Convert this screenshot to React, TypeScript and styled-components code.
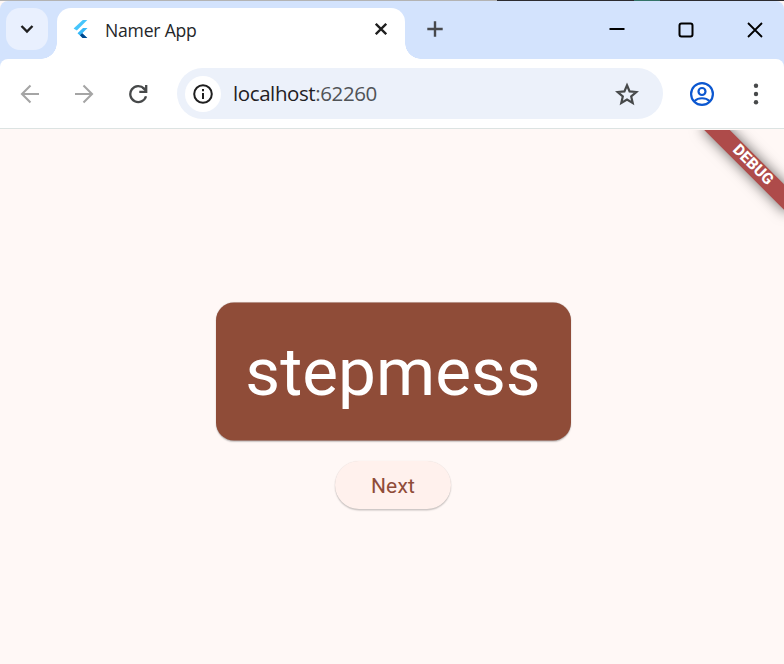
import React from 'react';
import styled, { createGlobalStyle } from 'styled-components';

const Global = createGlobalStyle`
  * { box-sizing: border-box; }
  html, body { margin: 0; padding: 0; background: #fff8f6; overflow: hidden; }
`;

const Window = styled.div`
  display: flex;
  flex-direction: column;
  width: 784px;
  height: 664px;
  overflow: hidden;
  background: #fff8f6;
`;

const Edge = styled.div`
  flex: none;
  height: 1px;
  background: linear-gradient(90deg, #b3b3b3 0 497px, #2c2c30 497px 634px, #347468 634px 660px, #2c2c30 660px);
`;

const TabStrip = styled.div`
  flex: none;
  display: flex;
  height: 58px;
  background: #d3e3fd;
  border-radius: 8px 8px 0 0;
`;

const TabSearch = styled.button`
  flex: none;
  display: grid;
  place-items: center;
  width: 42px;
  height: 42px;
  margin: 7px 9px 0 6px;
  padding: 0;
  border: 0;
  border-radius: 14px;
  background: #e9f0fe;
`;

const Tab = styled.div`
  position: relative;
  flex: none;
  display: flex;
  align-items: flex-start;
  width: 348px;
  height: 51px;
  margin-top: 7px;
  padding: 12px 18px 0 16px;
  border-radius: 14px 14px 0 0;
  background: #fff;

  &::before,
  &::after {
    content: '';
    position: absolute;
    bottom: 0;
    width: 16px;
    height: 16px;
  }
  &::before {
    left: -16px;
    background: radial-gradient(circle at 0 0, transparent 15.5px, #fff 16px);
  }
  &::after {
    right: -16px;
    background: radial-gradient(circle at 100% 0, transparent 15.5px, #fff 16px);
  }
`;

const TabTitle = styled.span`
  flex: 1;
  margin: -2px 0 0 14px;
  font: 400 17.6px/24px 'Open Sans', 'Noto Sans', sans-serif;
  letter-spacing: -0.22px;
  color: #242629;
  white-space: nowrap;
`;

const CloseMark = styled.svg`
  margin-top: 3px;
`;

const NewTab = styled.div`
  margin: 20px 0 0 22px;
  height: 17px;
  line-height: 0;
`;

const Controls = styled.div`
  display: flex;
  align-items: center;
  gap: 53px;
  height: 20px;
  margin: 19px 21.5px 0 auto;
`;

const Toolbar = styled.div`
  flex: none;
  display: flex;
  align-items: center;
  height: 70px;
  padding: 0 22px 0 20px;
  border-bottom: 1px solid #dce3e2;
  border-radius: 8px 8px 0 0;
  background: #fff;
  box-shadow: 0 -8px 0 0 #d3e3fd;
`;

const NavIcons = styled.div`
  display: flex;
  align-items: center;
  gap: 34px;
  width: 157px;
`;

const AddressBar = styled.div`
  display: flex;
  align-items: center;
  width: 486px;
  height: 51px;
  padding: 0 24px 0 8px;
  border-radius: 26px;
  background: #ecf1fa;
`;

const SiteInfo = styled.span`
  display: grid;
  place-items: center;
  width: 36px;
  height: 36px;
  border-radius: 50%;
  background: #fff;
`;

const Address = styled.span`
  flex: 1;
  margin: -2px 0 0 12px;
  font: 400 20.5px/30px 'Open Sans', 'Noto Sans', sans-serif;
  letter-spacing: -0.4px;
  color: #1f2023;
  white-space: nowrap;
`;

const Port = styled.span`
  color: #505357;
`;

const ToolbarEnd = styled.div`
  display: flex;
  align-items: center;
  justify-content: space-between;
  flex: 1;
  margin-left: 26px;
`;

const Content = styled.main`
  position: relative;
  flex: 1;
  display: flex;
  flex-direction: column;
  align-items: center;
  margin-top: 1px;
  padding: 172px 0 0 2px;
  overflow: hidden;
  background: #fff8f6;
`;

const WordCard = styled.div`
  display: grid;
  place-items: center;
  width: 355px;
  height: 138px;
  padding-bottom: 1px;
  border-radius: 18px;
  background: #8f4c38;
  box-shadow: 0 1.5px 1.5px rgba(0, 0, 0, 0.2), 0 0 1px rgba(0, 0, 0, 0.15);
  color: #fff;
  font: 400 67.5px/78px Roboto, sans-serif;
  transform: translate(0, 0.5px);
`;

const NextButton = styled.button`
  width: 116px;
  height: 48px;
  margin-top: 21px;
  padding: 2px 0 0;
  border: 0;
  border-radius: 24px;
  background: #fff1ed;
  box-shadow: 0 1.5px 1.5px rgba(0, 0, 0, 0.2), 0 0 1px rgba(0, 0, 0, 0.12);
  color: #8f4c38;
  font: 400 21px/30px Roboto, sans-serif;
  letter-spacing: 0.15px;
`;

const DebugRibbon = styled.div`
  position: absolute;
  top: 25px;
  right: -27px;
  width: 120px;
  height: 18px;
  padding-left: 4px;
  transform: rotate(45deg);
  background: #ae4b4a;
  box-shadow: 0 0 14px rgba(0, 0, 0, 0.6);
  color: #fff;
  font: 800 15.6px/17px Roboto, sans-serif;
  text-align: center;
`;

export default function App() {
  return (
    <>
      <Global />
      <Window>
        <Edge />
        <TabStrip>
          <TabSearch aria-label="Search tabs">
            <svg width="14" height="10" viewBox="0 0 14 10" fill="none" stroke="#1f1f1f" strokeWidth="2.4">
              <path d="M1.5 2 7 7.5 12.5 2" />
            </svg>
          </TabSearch>
          <Tab>
            <svg width="18" height="20" viewBox="0 0 18 20">
              <path d="M9.8 0H14.300L3.800 10.4.600 8.5Z" fill="#47c5fb" />
              <path d="M10 8H14.500L9.300 13.2 14.300 18H9.600L4.500 13.2Z" fill="#35b8f8" />
              <path d="M7 15.2 9.2 13.2 14.300 18H9.600Z" fill="#00468c" />
            </svg>
            <TabTitle>Namer App</TabTitle>
            <CloseMark width="12" height="12" viewBox="0 0 12 12" stroke="#1f1f1f" strokeWidth="2.3">
              <path d="m.8.8 10.4 10.4M11.2.8.8 11.2" />
            </CloseMark>
          </Tab>
          <NewTab>
            <svg width="16" height="16" viewBox="0 0 16 16" stroke="#47494d" strokeWidth="2.4">
              <path d="M8 .3v15.4M.3 8h15.4" />
            </svg>
          </NewTab>
          <Controls>
            <svg width="16" height="16" viewBox="0 0 16 16" stroke="#000" strokeWidth="2">
              <path d="M.5 7h15" />
            </svg>
            <svg width="16" height="16" viewBox="0 0 16 16" fill="none" stroke="#000" strokeWidth="2">
              <rect x="1.5" y="1.5" width="13" height="13" rx="2" />
            </svg>
            <svg width="16" height="16" viewBox="0 0 16 16" stroke="#000" strokeWidth="1.8">
              <path d="m1 1 14 14M15 1 1 15" />
            </svg>
          </Controls>
        </TabStrip>
        <Toolbar>
          <NavIcons>
            <svg width="20" height="20" viewBox="0 0 20 20" fill="none" stroke="#a5a5a5" strokeWidth="2.1">
              <path d="M19 10H2.5M10.5 1.5 2 10l8.500 8.500" />
            </svg>
            <svg width="20" height="20" viewBox="0 0 20 20" fill="none" stroke="#a5a5a5" strokeWidth="2.1">
              <path d="M1 10h16.500M9.500 1.500 18 10l-8.500 8.500" />
            </svg>
            <svg width="20" height="20" viewBox="0 0 20 20" fill="none" stroke="#47494a" strokeWidth="2.3">
              <path d="M18 12.300A8 8 0 1 1 16.200 4.700" />
              <path d="M18.200 1v6.900h-6.900M17.800 6.500 14.800 3.600" />
            </svg>
          </NavIcons>
          <AddressBar>
            <SiteInfo>
              <svg width="20" height="20" viewBox="0 0 20 20" fill="none" stroke="#1f1f1f" strokeWidth="2">
                <circle cx="10" cy="10" r="8.800" />
                <path d="M10 9v6M10 5v2.200" />
              </svg>
            </SiteInfo>
            <Address>
              localhost<Port>:62260</Port>
            </Address>
            <svg width="24" height="24" viewBox="0 0 24 24" fill="none" stroke="#47494a" strokeWidth="2.200">
              <path d="m12 3.300 2.600 6.100 6.700.6-5.100 4.400 1.500 6.500L12 17.500l-5.700 3.400 1.500-6.500L2.700 10l6.700-.6Z" />
            </svg>
          </AddressBar>
          <ToolbarEnd>
            <svg width="26" height="26" viewBox="0 0 26 26" fill="none" stroke="#0b57d0" strokeWidth="2.200">
              <circle cx="13" cy="13" r="10.900" />
              <circle cx="13" cy="10.500" r="3.500" />
              <path d="M5.500 20c4-3.700 11-3.700 15 0" />
            </svg>
            <svg width="12" height="24" viewBox="0 0 12 24" fill="#47494a">
              <circle cx="6" cy="3.800" r="2.200" />
              <circle cx="6" cy="12" r="2.200" />
              <circle cx="6" cy="20.200" r="2.200" />
            </svg>
          </ToolbarEnd>
        </Toolbar>
        <Content>
          <WordCard>stepmess</WordCard>
          <NextButton>Next</NextButton>
          <DebugRibbon>DEBUG</DebugRibbon>
        </Content>
      </Window>
    </>
  );
}
